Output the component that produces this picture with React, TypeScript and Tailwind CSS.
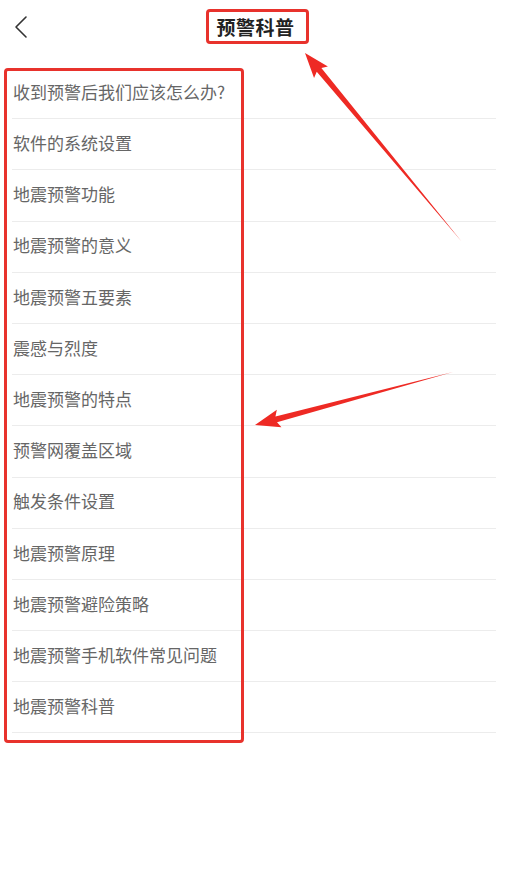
import React from 'react';

const topics = [
  '收到预警后我们应该怎么办?',
  '软件的系统设置',
  '地震预警功能',
  '地震预警的意义',
  '地震预警五要素',
  '震感与烈度',
  '地震预警的特点',
  '预警网覆盖区域',
  '触发条件设置',
  '地震预警原理',
  '地震预警避险策略',
  '地震预警手机软件常见问题',
  '地震预警科普',
];

// red annotation arrow: thin tail widening to a head at the tip
function Arrow({ x1, y1, x2, y2 }: { x1: number; y1: number; x2: number; y2: number }) {
  const dx = x2 - x1;
  const dy = y2 - y1;
  const len = Math.hypot(dx, dy);
  const ux = dx / len;
  const uy = dy / len;
  const nx = -uy;
  const ny = ux;
  const head = 22;
  const bx = x2 - ux * head;
  const by = y2 - uy * head;
  const pts = [
    [x1, y1],
    [bx + nx * 3, by + ny * 3],
    [bx - ux * 3 + nx * 9, by - uy * 3 + ny * 9],
    [x2, y2],
    [bx - ux * 3 - nx * 9, by - uy * 3 - ny * 9],
    [bx - nx * 3, by - ny * 3],
  ]
    .map((p) => p.join(','))
    .join(' ');
  return <polygon points={pts} fill="#ee2a24" />;
}

export default function App() {
  return (
    <div
      className="relative w-[511px] h-[896px] bg-white overflow-hidden"
      style={{ fontFamily: '"Noto Sans CJK SC", "Noto Sans", sans-serif' }}
    >
      {/* Header */}
      <div className="relative h-[54px] flex items-center justify-center">
        <button className="absolute left-[12px] top-[15px] w-[18px] h-[24px] flex items-center justify-center">
          <svg width="16" height="24" viewBox="0 0 16 24" fill="none">
            <path d="M13 2 L3 12 L13 22" stroke="#333" strokeWidth="1.6" strokeLinecap="round" strokeLinejoin="round" />
          </svg>
        </button>
        <h1 className="text-[19px] font-bold text-[#222] tracking-[0.5px] mt-[1px]">预警科普</h1>
      </div>

      {/* Topic list */}
      <ul className="mt-[14px] ml-[12px] mr-[15px]">
        {topics.map((t) => (
          <li key={t} className="h-[51.2px] flex items-center border-b border-[#ececec] text-[17px] text-[#666] pl-px pb-[3px]">
            {t}
          </li>
        ))}
      </ul>

      {/* Annotation boxes */}
      <div className="absolute left-[206px] top-[9px] w-[103px] h-[35px] border-[3px] border-[#e8322c] rounded-[4px]" />
      <div className="absolute left-[4px] top-[68px] w-[240px] h-[675px] border-[3px] border-[#e8322c] rounded-[4px]" />

      {/* Annotation arrows */}
      <svg className="absolute inset-0 pointer-events-none" width="511" height="896">
        <Arrow x1={462} y1={242} x2={305} y2={53} />
        <Arrow x1={453} y1={372} x2={255} y2={425} />
      </svg>
    </div>
  );
}
